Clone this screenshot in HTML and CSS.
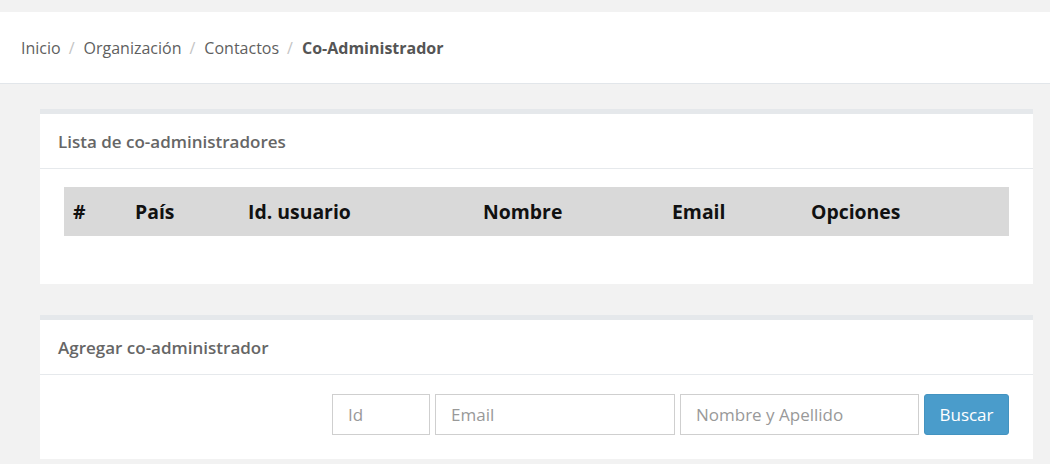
FILE: index.html
```html
<!DOCTYPE html>
<html lang="es">
<head>
<meta charset="utf-8">
<title>Co-Administrador</title>
<link rel="stylesheet" href="styles.css">
</head>
<body>
<nav class="breadcrumb-bar">
  <ol class="breadcrumb">
    <li class="crumb">Inicio</li>
    <li class="sep">/</li>
    <li class="crumb">Organización</li>
    <li class="sep">/</li>
    <li class="crumb">Contactos</li>
    <li class="sep">/</li>
    <li class="crumb active">Co-Administrador</li>
  </ol>
</nav>
<main class="content">
  <section class="card">
    <header class="card-header">Lista de co-administradores</header>
    <div class="card-body list-body">
      <table class="table">
        <thead>
          <tr>
            <th class="c-num">#</th>
            <th class="c-pais">País</th>
            <th class="c-id">Id. usuario</th>
            <th class="c-nombre">Nombre</th>
            <th class="c-email">Email</th>
            <th class="c-opc">Opciones</th>
          </tr>
        </thead>
      </table>
    </div>
  </section>
  <section class="card">
    <header class="card-header">Agregar co-administrador</header>
    <div class="card-body form-body">
      <form class="search-form">
        <input class="field f-id" type="text" placeholder="Id">
        <input class="field f-email" type="text" placeholder="Email">
        <input class="field f-name" type="text" placeholder="Nombre y Apellido">
        <button class="btn" type="button">Buscar</button>
      </form>
    </div>
  </section>
</main>
</body>
</html>
```
FILE: styles.css
```css
* { box-sizing: border-box; }
html, body {
  margin: 0;
  padding: 0;
  background: #f2f2f2;
  font-family: "Open Sans", "Liberation Sans", sans-serif;
  color: #666;
}
.breadcrumb-bar {
  margin-top: 12px;
  background: #fff;
  border-bottom: 1px solid #e2e6ea;
  height: 72px;
  display: flex;
  align-items: center;
  padding-left: 21px;
}
.breadcrumb {
  list-style: none;
  margin: 0;
  padding: 0;
  display: flex;
  align-items: center;
  font-size: 16px;
  color: #5f5f5f;
}
.sep {
  color: #c4c4c4;
  margin: 0 9px 0 8px;
}
.crumb.active {
  font-weight: 700;
  color: #555;
}
.content {
  padding: 25px 17px 0 40px;
  display: flex;
  flex-direction: column;
  gap: 31px;
}
.card {
  background: #fff;
  border-top: 5px solid #e5e8eb;
}
.card-header {
  height: 55px;
  border-bottom: 1px solid #e6e9ec;
  display: flex;
  align-items: center;
  padding-left: 18px;
  font-size: 17px;
  font-weight: 600;
  color: #666;
}
.list-body {
  padding: 18px 24px 48px 24px;
}
.table {
  width: 100%;
  border-collapse: collapse;
  table-layout: fixed;
}
.table th {
  background: #d9d9d9;
  height: 49px;
  text-align: left;
  font-size: 19.4px;
  font-weight: 700;
  color: #111;
  padding: 0 0 0 9px;
}
.c-num { width: 62px; }
.c-pais { width: 113px; }
.c-id { width: 235px; }
.c-nombre { width: 189px; }
.c-email { width: 139px; }
.form-body {
  padding: 19px 24px 24px 24px;
}
.search-form {
  display: flex;
  justify-content: flex-end;
  gap: 5px;
}
.field {
  height: 41px;
  border: 1px solid #cfcfcf;
  border-radius: 0;
  font-family: inherit;
  font-size: 17px;
  padding: 0 15px;
  color: #555;
  background: #fff;
}
.field::placeholder { color: #999; }
.f-id { width: 98px; }
.f-email { width: 240px; }
.f-name { width: 239px; }
.btn {
  height: 41px;
  width: 85px;
  background: #4a9ccb;
  border: 1px solid #4393c0;
  border-radius: 3px;
  color: #fff;
  font-family: inherit;
  font-size: 17px;
  padding: 0;
}
```
